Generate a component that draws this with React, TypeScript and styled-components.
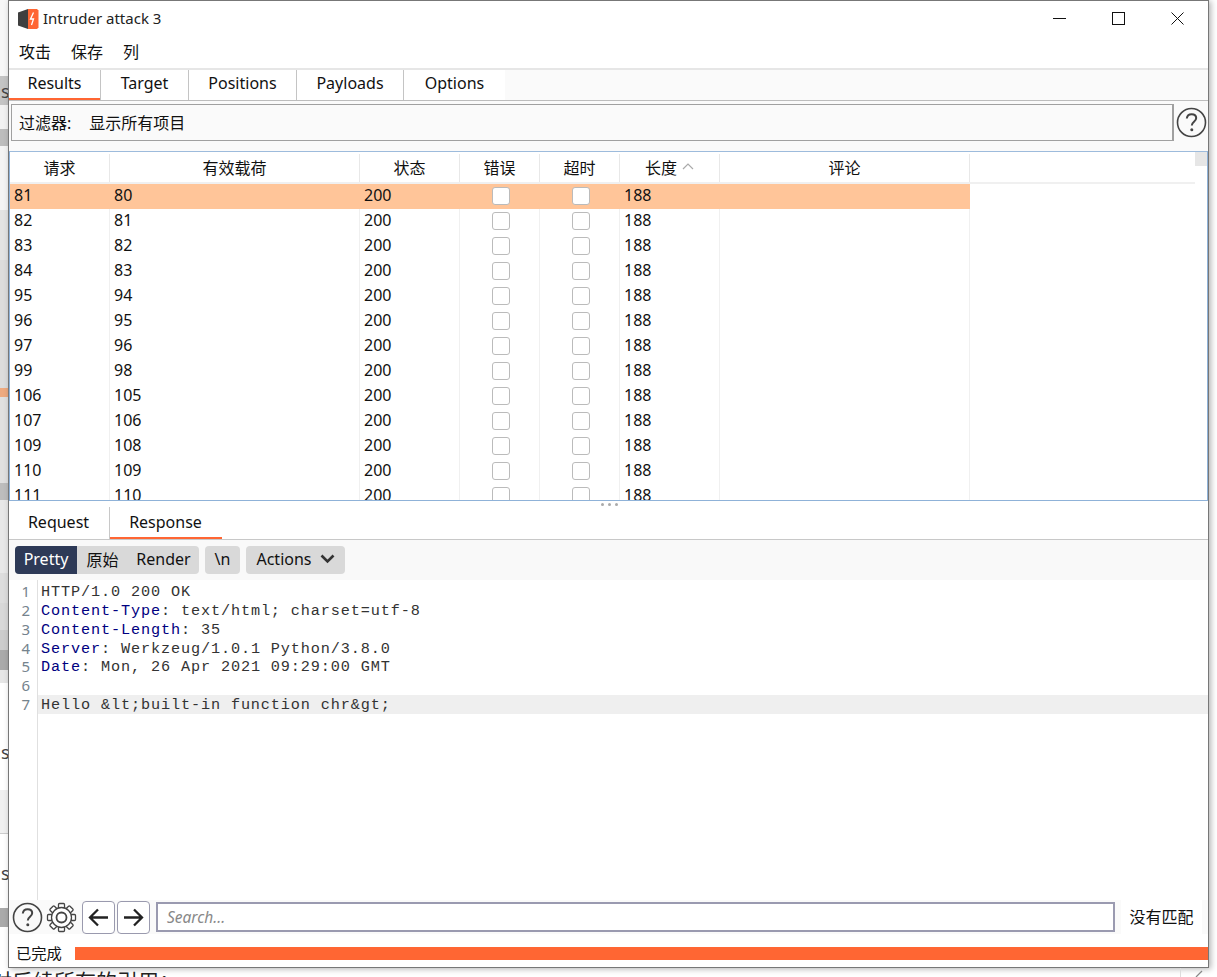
import React from "react";
import styled, { createGlobalStyle } from "styled-components";

const UI = `"Noto Sans", "Noto Sans CJK SC", sans-serif`;
const Global = createGlobalStyle`
  html, body { margin: 0; padding: 0; background: #fff; }
  body { font-family: ${UI}; color: #111; }
  * { box-sizing: border-box; }
`;

const Page = styled.div`width: 1217px; height: 977px; overflow: hidden; display: flex; flex-direction: column; background: #fff;`;
const Desk = styled.div`display: flex; height: 968px; flex: none;`;
const LeftStrip = styled.div`width: 8px; flex: none; display: flex; flex-direction: column;`;
const Seg = styled.div<{ $h: number; $c: string; $t?: number }>`
  height: ${(p) => p.$h}px; flex: none; background: ${(p) => p.$c}; overflow: hidden;
  font: 18px/18px "Noto Sans", sans-serif; color: #444; padding: ${(p) => p.$t ?? 0}px 0 0 1px;
`;
const BottomRow = styled.div`height: 9px; flex: none; display: flex; overflow: hidden;`;
const Behind = styled.div`font: 21px/24px "Noto Sans CJK SC", sans-serif; margin-left: -9px; white-space: nowrap; color: #222; height: 24px;`;
const ResizeMark = styled.svg`margin-left: auto; margin-right: 0; flex: none;`;

const Win = styled.div`width: 1201px; flex: none; height: 968px; border: 1px solid #777; display: flex; flex-direction: column; background: #fff; box-shadow: 2px 1px 6px rgba(0,0,0,.3);`;
const TitleBar = styled.div`height: 35px; flex: none; display: flex; align-items: center; padding-left: 9px; font-size: 15px; color: #222;`;
const TitleText = styled.span`margin-left: 4px; line-height: 35px;`;
const WinBtns = styled.div`margin-left: auto; display: flex; align-items: center; margin-right: 24px; gap: 46px; height: 35px;`;
const MenuBar = styled.div`height: 32px; flex: none; display: flex; align-items: center; padding: 0 0 2px 10px; gap: 20px; font-size: 16px;`;
const TabBar = styled.div`height: 33px; flex: none; display: flex; border-top: 2px solid #e6e6e6; border-bottom: 1px solid #bdbdbd; background: #fafafa;`;
const Tab = styled.div<{ $w: number; $active?: boolean; $sep?: boolean }>`
  width: ${(p) => p.$w}px; flex: none; background: #fff; display: flex; align-items: center; justify-content: center; font-size: 16px; line-height: 28px; padding-bottom: 5px;
  border-right: ${(p) => (p.$sep ? "1px solid #c4c4c4" : "none")};
  ${(p) => p.$active && "box-shadow: inset 0 -2px 0 #ff6633;"}
`;
const FilterRow = styled.div`height: 50px; flex: none; display: flex; padding: 3px 1px 10px 2px; background: #fafafa; align-items: stretch;`;
const FilterBox = styled.div`width: 1163px; flex: none; border: 1.5px solid #a0a0a0; border-right-width: 2px; display: flex; align-items: center; padding: 0 0 2px 7px; font-size: 16px; gap: 18px; background: #fafafa;`;
const HelpWrap = styled.div`margin-left: 2px; display: flex; align-items: center;`;
const TableArea = styled.div`height: 349px; flex: none; position: relative; overflow: hidden; border: 1px solid #8fb2d8; border-bottom: none; background: #fff; border-top-color: #9dbbdc;`;
const cols = "100px 250px 100px 80px 80px 100px 250px";
const Head = styled.div`display: grid; grid-template-columns: ${cols}; height: 32px; border-bottom: 2px solid #f0f0f0; margin-right: 12px; padding-top: 2px;`;
const HeadCell = styled.div`display: flex; align-items: center; justify-content: center; height: 28px; font-size: 16px; gap: 5px; padding-bottom: 3px; border-right: 1px solid #e8e8e8;`;
const Row = styled.div<{ $sel?: boolean }>`display: grid; grid-template-columns: ${cols}; width: 960px; height: 25px; background: ${(p) => (p.$sel ? "#ffc599" : "#fff")};`;
const Cell = styled.div<{ $sel?: boolean }>`font-size: 16px; line-height: 23px; padding-left: 4px; border-right: 1px solid ${(p) => (p.$sel ? "transparent" : "#f0f0f0")}; color: #111; overflow: hidden;`;
const CheckCell = styled.div<{ $sel?: boolean }>`display: flex; justify-content: center; align-items: flex-start; padding: 3px 0 0 3px; border-right: 1px solid ${(p) => (p.$sel ? "transparent" : "#f0f0f0")};`;
const Check = styled.div`width: 18px; height: 18px; border: 1.5px solid #bbb; border-radius: 3px; background: #fff;`;
const Thumb = styled.div`position: absolute; right: 0; top: 0; width: 12px; height: 14px; background: #e6e6e6;`;
const Splitter = styled.div`height: 1px; flex: none; background: #8fb2d8; position: relative;`;
const Grip = styled.div`position: absolute; top: 3px; left: 592px; display: flex; gap: 4px;`;
const GripDot = styled.span`width: 3px; height: 3px; background: #aaa; border-radius: 50%;`;
const SubTabs = styled.div`height: 39px; flex: none; display: flex; align-items: stretch; border-bottom: 1px solid #c8c8c8; background: #fff;`;
const SubTab = styled.div<{ $w: number; $active?: boolean }>`
  width: ${(p) => p.$w}px; flex: none; font-size: 16px; display: flex; align-items: center; justify-content: center; padding: 3px 1px 0 0;
  ${(p) => p.$active && "box-shadow: inset 0 -2px 0 #ff6633;"}
`;
const SubSep = styled.div`width: 1px; margin-top: 6px; background: #c8c8c8;`;
const Toolbar = styled.div`height: 40px; flex: none; display: flex; align-items: flex-start; padding: 6px 0 0 6px; gap: 6px; background: #f9f9f9;`;
const BtnGroup = styled.div`height: 28px; display: flex; background: #d9d9d9; border-radius: 4px; overflow: hidden; font-size: 16px;`;
const Seg2 = styled.div<{ $w: number; $active?: boolean }>`width: ${(p) => p.$w}px; display: flex; align-items: center; justify-content: center; gap: 8px; padding-bottom: 2px; background: ${(p) => (p.$active ? "#2e3a57" : "transparent")}; color: ${(p) => (p.$active ? "#fff" : "#111")};`;
const Editor = styled.div`flex: none; height: 320px; display: flex; background: #fff;`;
const Gutter = styled.div`width: 29px; flex: none; border-right: 1px solid #e0e0e0; padding-top: 2px;`;
const Num = styled.div`height: 18.85px; text-align: right; padding-right: 7px; font: 15px/18px "Noto Sans", sans-serif; color: #75838d;`;
const Code = styled.div`flex: 1; padding-top: 2px; min-width: 0;`;
const CodeLine = styled.div<{ $hl?: boolean }>`height: 18.85px; padding-left: 3px; font: 15.2px/20.5px "Liberation Mono", monospace; letter-spacing: .88px; white-space: pre; color: #333; background: ${(p) => (p.$hl ? "#efefef" : "transparent")};`;
const Key = styled.span`color: #000080;`;
const SearchBar = styled.div`height: 34px; flex: none; display: flex; align-items: center; padding-left: 1px; background: #fafafa;`;
const IconSlot = styled.div`width: 34px; height: 32px; display: flex; align-items: center; justify-content: center; flex: none;`;
const ArrowBtn = styled.div`width: 33px; height: 33px; border: 1px solid #9a9aae; border-radius: 4px; background: #fff; display: flex; align-items: center; justify-content: center; margin-left: 2px; flex: none;`;
const FirstArrow = styled(ArrowBtn)`margin-left: 4px;`;
const SearchInput = styled.div`width: 959px; height: 30px; margin-left: 6px; border: 2px solid #9a9ab0; background: #fff; flex: none; display: flex; align-items: center; padding-left: 9px; font: italic 15.5px "Noto Sans", sans-serif; color: #888;`;
const NoMatch = styled.div`margin-left: 6px; width: 81px; height: 34px; background: #fff; display: flex; align-items: center; justify-content: center; font-size: 16px; padding-bottom: 2px; flex: none;`;
const Status = styled.div`flex: 1; display: flex; align-items: center; background: #fff; padding: 6px 0 0 7px; font-size: 15.3px;`;
const StatusText = styled.span`margin-top: -3px;`;
const Progress = styled.div`flex: 1; height: 13px; background: #ff6633; margin-left: 13px;`;

const data: [string, string][] = [["81","80"],["82","81"],["83","82"],["84","83"],["95","94"],["96","95"],["97","96"],["99","98"],["106","105"],["107","106"],["109","108"],["110","109"],["111","110"]];

const strip: [number, string, string?, number?][] = [
  [76,"#f7f7f7"],[29,"#c4c4c4","s",6],[24,"#f2f2f2"],[17,"#bdbdbd"],[64,"#f4f4f4"],[50,"#e3e3e3"],[128,"#dcdcdc"],[9,"#eeaa80"],
  [86,"#e0e0e0"],[17,"#bdbdbd"],[73,"#e8e8e8"],[30,"#ddd"],[27,"#d8d8d8"],[20,"#ccc"],[20,"#aaa"],[13,"#e6e6e6"],
  [107,"#fff","s",60],[43,"#f0f0f0"],[1,"#ccc"],[74,"#fff","s",30],[19,"#aaa"],[41,"#fff"],
];

const Help = () => (
  <svg width="31" height="31" viewBox="0 0 31 31">
    <circle cx="15.5" cy="15.5" r="14" fill="none" stroke="#444" strokeWidth="1.6" />
    <path d="M10.8 11.5c.3-2.8 2.2-4.3 4.8-4.3 2.7 0 4.6 1.6 4.6 3.9 0 3.6-4.4 3.7-4.4 7.3" fill="none" stroke="#444" strokeWidth="2" />
    <circle cx="15.8" cy="22.8" r="1.5" fill="#444" />
  </svg>
);

const Gear = () => {
  const teeth = Array.from({ length: 8 }, (_, i) => i * 45);
  return (
    <svg width="31" height="31" viewBox="0 0 31 31">
      {teeth.map((a) => (
        <rect key={a} x="12.5" y="1.5" width="6" height="6" rx="1" fill="#fff" stroke="#444" strokeWidth="1.3" transform={`rotate(${a} 15.5 15.5)`} />
      ))}
      <circle cx="15.5" cy="15.5" r="10" fill="#fff" stroke="#444" strokeWidth="1.3" />
      <circle cx="15.5" cy="15.5" r="5" fill="#fff" stroke="#444" strokeWidth="1.8" />
    </svg>
  );
};

const Logo = () => (
  <svg width="21" height="20" viewBox="0 0 21 20">
    <path d="M0 3.5L10 0v20L0 16.5z" fill="#3f3f3f" />
    <path d="M10 0h9l1.5 1.5v17L19 20h-9z" fill="#ff6633" />
    <path d="M15.5 3.5l-3 6.5h3l-2 6" fill="none" stroke="#fff" strokeWidth="1.3" />
  </svg>
);

export default function App() {
  return (
    <Page>
      <Global />
      <Desk>
        <LeftStrip>
          {strip.map(([h, c, t, top], i) => <Seg key={i} $h={h} $c={c} $t={top}>{t}</Seg>)}
        </LeftStrip>
        <Win>
          <TitleBar>
            <Logo />
            <TitleText>Intruder attack 3</TitleText>
            <WinBtns>
              <svg width="13" height="13" viewBox="0 0 13 13"><path d="M0 6.5h13" stroke="#111" strokeWidth="1" /></svg>
              <svg width="13" height="13" viewBox="0 0 13 13"><rect x=".5" y=".5" width="12" height="12" fill="none" stroke="#111" strokeWidth="1" /></svg>
              <svg width="13" height="13" viewBox="0 0 13 13"><path d="M.5.5l12 12M12.5.5l-12 12" stroke="#111" strokeWidth="1" /></svg>
            </WinBtns>
          </TitleBar>
          <MenuBar>
            <span>攻击</span><span>保存</span><span>列</span>
          </MenuBar>
          <TabBar>
            <Tab $w={92} $active $sep>Results</Tab>
            <Tab $w={88} $sep>Target</Tab>
            <Tab $w={108} $sep>Positions</Tab>
            <Tab $w={107} $sep>Payloads</Tab>
            <Tab $w={101}>Options</Tab>
          </TabBar>
          <FilterRow>
            <FilterBox><span>过滤器:</span><span>显示所有项目</span></FilterBox>
            <HelpWrap><Help /></HelpWrap>
          </FilterRow>
          <TableArea>
            <Head>
              <HeadCell>请求</HeadCell>
              <HeadCell>有效载荷</HeadCell>
              <HeadCell>状态</HeadCell>
              <HeadCell>错误</HeadCell>
              <HeadCell>超时</HeadCell>
              <HeadCell>长度
                <svg width="12" height="7" viewBox="0 0 12 7"><path d="M1 6l5-5 5 5" fill="none" stroke="#aaa" strokeWidth="1.2" /></svg>
              </HeadCell>
              <HeadCell>评论</HeadCell>
            </Head>
            {data.map(([a, b], i) => (
              <Row key={a} $sel={i === 0}>
                <Cell $sel={i === 0}>{a}</Cell>
                <Cell $sel={i === 0}>{b}</Cell>
                <Cell $sel={i === 0}>200</Cell>
                <CheckCell $sel={i === 0}><Check /></CheckCell>
                <CheckCell $sel={i === 0}><Check /></CheckCell>
                <Cell $sel={i === 0}>188</Cell>
                <Cell $sel={i === 0} />
              </Row>
            ))}
            <Thumb />
          </TableArea>
          <Splitter>
            <Grip><GripDot /><GripDot /><GripDot /></Grip>
          </Splitter>
          <SubTabs>
            <SubTab $w={100}>Request</SubTab>
            <SubSep />
            <SubTab $w={112} $active>Response</SubTab>
          </SubTabs>
          <Toolbar>
            <BtnGroup>
              <Seg2 $w={62} $active>Pretty</Seg2>
              <Seg2 $w={51}>原始</Seg2>
              <Seg2 $w={71}>Render</Seg2>
            </BtnGroup>
            <BtnGroup><Seg2 $w={35}>\n</Seg2></BtnGroup>
            <BtnGroup>
              <Seg2 $w={99}>Actions
                <svg width="15" height="10" viewBox="0 0 15 10"><path d="M1.5 1.5l6 6 6-6" fill="none" stroke="#333" strokeWidth="2.6" /></svg>
              </Seg2>
            </BtnGroup>
          </Toolbar>
          <Editor>
            <Gutter>
              {[1,2,3,4,5,6,7].map((n) => <Num key={n}>{n}</Num>)}
            </Gutter>
            <Code>
              <CodeLine>HTTP/1.0 200 OK</CodeLine>
              <CodeLine><Key>Content-Type</Key>: text/html; charset=utf-8</CodeLine>
              <CodeLine><Key>Content-Length</Key>: 35</CodeLine>
              <CodeLine><Key>Server</Key>: Werkzeug/1.0.1 Python/3.8.0</CodeLine>
              <CodeLine><Key>Date</Key>: Mon, 26 Apr 2021 09:29:00 GMT</CodeLine>
              <CodeLine> </CodeLine>
              <CodeLine $hl>Hello &amp;lt;built-in function chr&amp;gt;</CodeLine>
            </Code>
          </Editor>
          <SearchBar>
            <IconSlot><Help /></IconSlot>
            <IconSlot><Gear /></IconSlot>
            <FirstArrow>
              <svg width="21" height="19" viewBox="0 0 21 19"><path d="M20 9.5H2M10 1.5l-8 8 8 8" fill="none" stroke="#222" strokeWidth="2.3" /></svg>
            </FirstArrow>
            <ArrowBtn>
              <svg width="21" height="19" viewBox="0 0 21 19"><path d="M1 9.5h18M11 1.5l8 8-8 8" fill="none" stroke="#222" strokeWidth="2.3" /></svg>
            </ArrowBtn>
            <SearchInput>Search...</SearchInput>
            <NoMatch>没有匹配</NoMatch>
          </SearchBar>
          <Status>
            <StatusText>已完成</StatusText>
            <Progress />
          </Status>
        </Win>
      </Desk>
      <BottomRow>
        <Behind>对后续所有的引用：</Behind>
        <ResizeMark width="37" height="9" viewBox="0 0 37 9">
          <path d="M.5 0v9" stroke="#ddd" />
          <path d="M16 9l6-6" stroke="#888" strokeWidth="1.2" />
        </ResizeMark>
      </BottomRow>
    </Page>
  );
}
